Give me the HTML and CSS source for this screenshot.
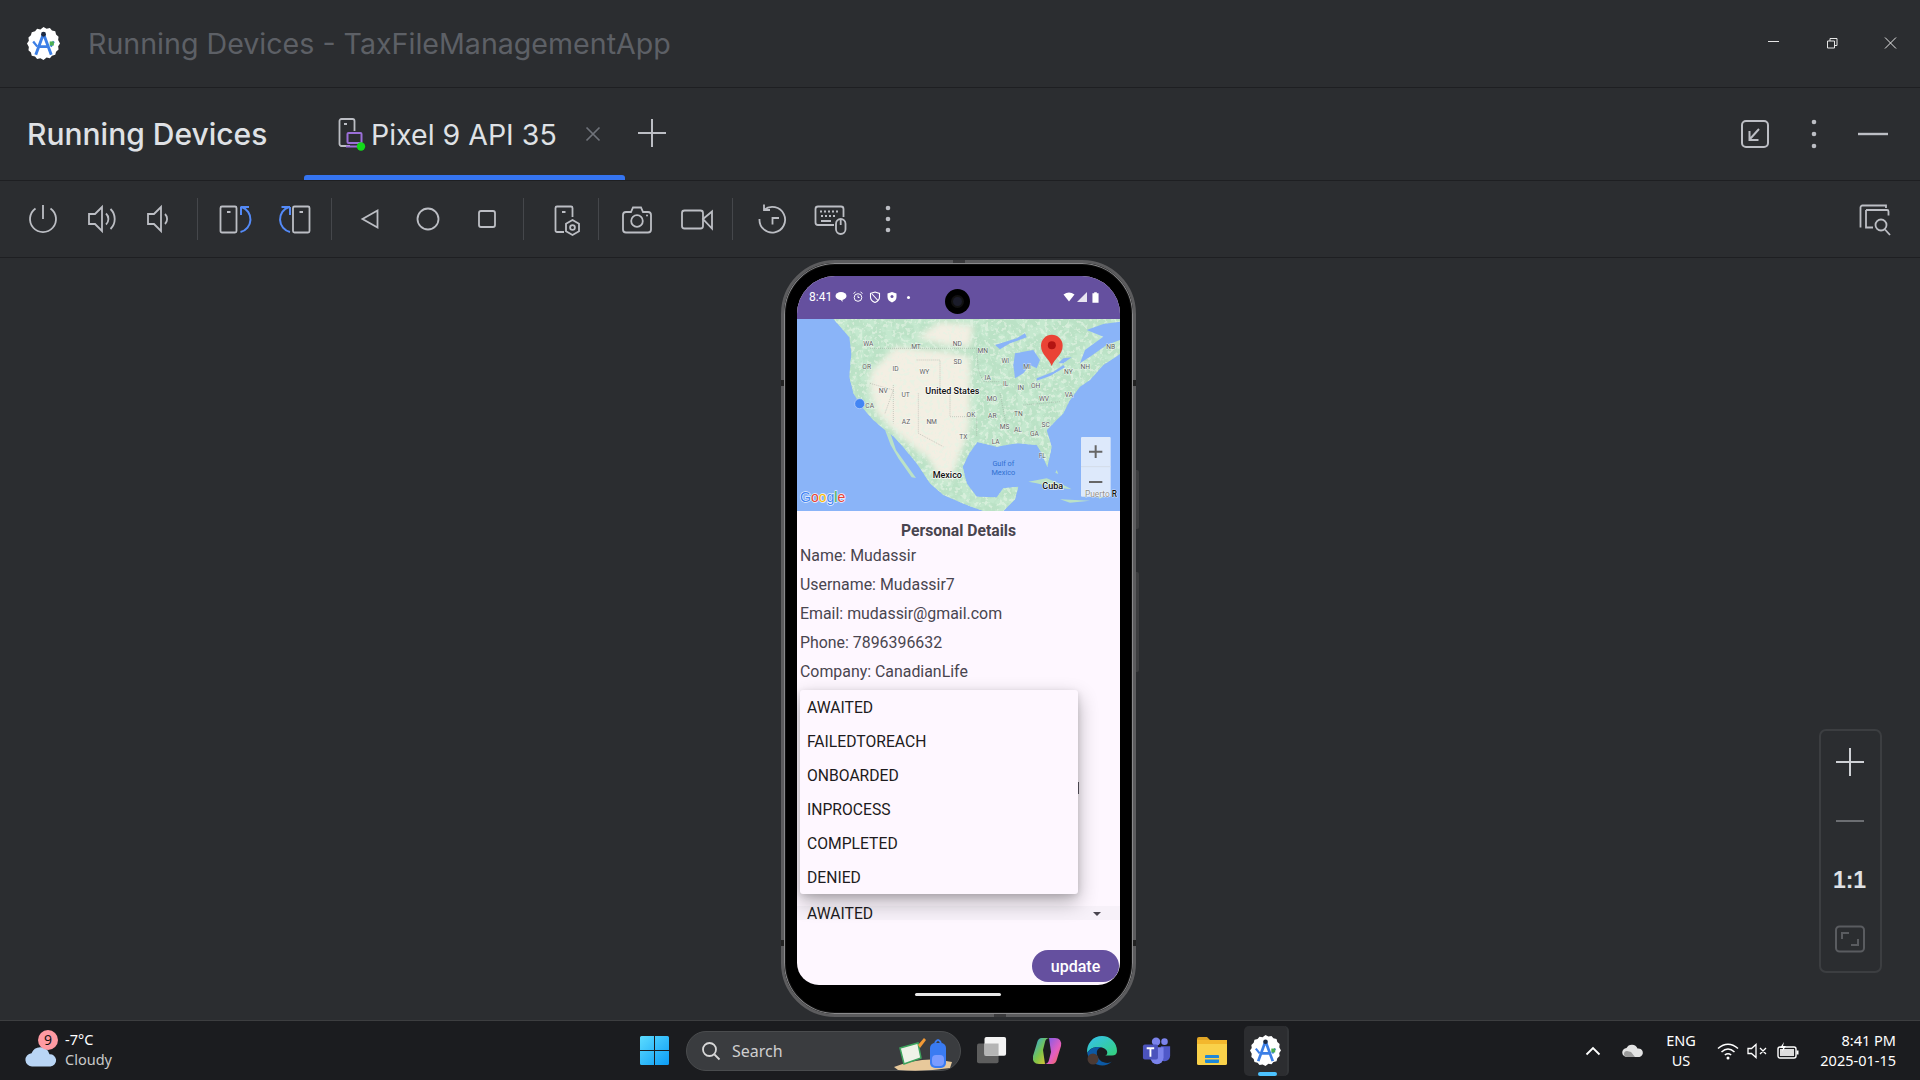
FILE: index.html
```html
<!DOCTYPE html>
<html lang="en">
<head>
<meta charset="utf-8">
<title>Running Devices - TaxFileManagementApp</title>
<link rel="stylesheet" href="styles.css">
</head>
<body>
<svg class="defs" width="0" height="0" aria-hidden="true">
  <symbol id="as-logo" viewBox="0 0 32 32">
    <path d="M16 0l3 1.600 3.200-.6 2 2.400 3.200.8.8 3 2.400 2.200-.4 3.200L32 16l-1.800 2.600.4 3.200-2.400 2.200-.8 3-3.200.8-2 2.400-3.200-.6L16 32l-3-1.600-3.200.6-2-2.400-3.200-.8-.8-3-2.400-2.200.4-3.200L0 16l1.800-2.600-.4-3.200 2.400-2.200.8-3 3.200-.8 2-2.400 3.200.6z" fill="#fff"/>
    <path d="M16 6.500L8.500 27M16 6.500L23.500 27M10.500 19h11" fill="none" stroke="#3c7fe6" stroke-width="2.800"/>
    <path d="M6 14l4 5M26 14l-3 5" stroke="#3c7fe6" stroke-width="2.200"/>
    <circle cx="16" cy="7" r="2.400" fill="#1c2b44"/>
    <rect x="22" y="14" width="4" height="4" fill="#4caf50"/>
  </symbol>
</svg>

<header class="titlebar">
  <svg class="as-logo"><use href="#as-logo"/></svg>
  <span class="title">Running Devices - TaxFileManagementApp</span>
  <div class="winctl">
    <svg class="ctl" viewBox="0 0 16 16"><path d="M2 6.500h11" stroke="#e6e6e6" fill="none"/></svg>
    <svg class="ctl" viewBox="0 0 16 16"><path d="M3.500 6h7v7h-7zM6 6V3.500h7v7h-2.500" stroke="#e6e6e6" fill="none"/></svg>
    <svg class="ctl" viewBox="0 0 16 16"><path d="M3 2.500l11 11M14 2.500l-11 11" stroke="#e6e6e6" fill="none"/></svg>
  </div>
</header>

<nav class="tabbar">
  <span class="tool-title">Running Devices</span>
  <div class="tab">
    <svg class="tab-icon" viewBox="0 0 30 34">
      <path d="M13 29H4.500a2 2 0 0 1-2-2V4a2 2 0 0 1 2-2h11a2 2 0 0 1 2 2v10M7 7h3" fill="none" stroke="#bcbec4" stroke-width="1.800"/>
      <rect x="10.500" y="16" width="14" height="10" rx="1" fill="none" stroke="#9b6fd8" stroke-width="2"/>
      <path d="M9 29.500h17" stroke="#9b6fd8" stroke-width="2"/>
      <circle cx="24" cy="29.500" r="4.200" fill="#12d81a"/>
    </svg>
    <span class="tab-label">Pixel 9 API 35</span>
    <svg class="tab-close" viewBox="0 0 16 16"><path d="M1.500 1.500l13 13M14.500 1.500l-13 13" stroke="#6f737a" stroke-width="1.700"/></svg>
  </div>
  <svg class="tab-add" viewBox="0 0 30 30"><path d="M15 1v28M1 15h28" stroke="#bcbec4" stroke-width="2"/></svg>
  <div class="tab-actions">
    <svg class="ic" viewBox="0 0 36 36"><rect x="5" y="5" width="26" height="26" rx="4" fill="none" stroke="#bcbec4" stroke-width="2"/><path d="M22 13l-9 10M12.500 15v9h9" fill="none" stroke="#bcbec4" stroke-width="2"/></svg>
    <svg class="ic" viewBox="0 0 36 36"><circle cx="18" cy="6" r="2.300" fill="#bcbec4"/><circle cx="18" cy="18" r="2.300" fill="#bcbec4"/><circle cx="18" cy="30" r="2.300" fill="#bcbec4"/></svg>
    <svg class="ic" viewBox="0 0 36 36"><path d="M3 18h30" stroke="#bcbec4" stroke-width="2.400"/></svg>
  </div>
</nav>

<div class="toolbar">
  <svg class="ic" viewBox="0 0 36 36"><path d="M10.500 7.500a13 13 0 1 0 15 0M18 4v14" class="st"/></svg>
  <svg class="ic" viewBox="0 0 36 36"><path d="M4 13h6l7-7v24l-7-7H4zM21 12.500a7.500 7.500 0 0 1 0 11M25.500 8a14 14 0 0 1 0 20" class="st"/></svg>
  <svg class="ic" viewBox="0 0 36 36"><path d="M7 13h6l7-7v24l-7-7H7zM24 13a7 7 0 0 1 0 10" class="st"/></svg>
  <i class="sep"></i>
  <svg class="ic" viewBox="0 0 36 36"><path d="M4 5.500h13a1.500 1.500 0 0 1 1.500 1.500v23a1.500 1.500 0 0 1-1.500 1.500H4A1.500 1.500 0 0 1 2.500 30V7A1.500 1.500 0 0 1 4 5.500zM9 11h3.500" class="st"/><path d="M22.500 31a13 13 0 0 0 1-25M22.500 6h8.500M23 6v8" fill="none" stroke="#548af7" stroke-width="2"/></svg>
  <svg class="ic" viewBox="0 0 36 36"><path d="M18.500 5.500h13.500a1.500 1.500 0 0 1 1.500 1.500v23a1.500 1.500 0 0 1-1.500 1.500H18.500a1.500 1.500 0 0 1-1.500-1.500V7a1.500 1.500 0 0 1 1.500-1.500zM23.500 11h3.500" class="st"/><path d="M14 31a13 13 0 0 1-1-25M14 6H5.500M14 6v8" fill="none" stroke="#548af7" stroke-width="2"/></svg>
  <i class="sep"></i>
  <svg class="ic" viewBox="0 0 36 36"><path d="M25.500 9.500v17L10.500 18z" class="st"/></svg>
  <svg class="ic" viewBox="0 0 36 36"><circle cx="18" cy="18" r="10.500" class="st"/></svg>
  <svg class="ic" viewBox="0 0 36 36"><rect x="10" y="10" width="16" height="16" rx="2" class="st"/></svg>
  <i class="sep"></i>
  <svg class="ic" viewBox="0 0 36 36"><path d="M14 31H7a1.500 1.500 0 0 1-1.500-1.500V7A1.500 1.500 0 0 1 7 5.500h14A1.500 1.500 0 0 1 22.500 7v9M12 11h3.500" class="st"/><path d="M22.500 19l6.500 3.800v7.400l-6.500 3.800-6.500-3.800v-7.400z" class="st"/><circle cx="22.500" cy="26.500" r="2.400" class="st"/></svg>
  <i class="sep"></i>
  <svg class="ic" viewBox="0 0 36 36"><path d="M7 11h5l2-4.500h8l2 4.500h5a3 3 0 0 1 3 3v14.500a3 3 0 0 1-3 3H7a3 3 0 0 1-3-3V14a3 3 0 0 1 3-3z" class="st"/><circle cx="18" cy="20" r="5.800" class="st"/><circle cx="28" cy="14.500" r="1" fill="#bcbec4"/></svg>
  <svg class="ic" viewBox="0 0 36 36"><rect x="3" y="9.500" width="21" height="18" rx="2.500" class="st"/><path d="M24 18l9-7.500v17z" class="st"/></svg>
  <i class="sep"></i>
  <svg class="ic" viewBox="0 0 36 36"><path d="M10 9a12.800 12.800 0 1 1-4.500 9M10 3.500V9h6M25 17h-6.500v6.500" class="st"/></svg>
  <svg class="ic" viewBox="0 0 36 36"><path d="M22 24H6a2.500 2.500 0 0 1-2.500-2.500V8A2.500 2.500 0 0 1 6 5.500h23A2.500 2.500 0 0 1 31.500 8v8M9 20h10" class="st"/><path d="M8 10.500h2M12 10.500h2M16 10.500h2M20 10.500h2M24 10.500h2M9 15h2M13 15h2M17 15h2M21 15h2" stroke="#bcbec4" stroke-width="1.800"/><rect x="24" y="18" width="9.500" height="15" rx="4.700" class="st"/><path d="M28.700 19v5" class="st"/></svg>
  <svg class="ic" viewBox="0 0 36 36"><circle cx="18" cy="7" r="2.300" fill="#bcbec4"/><circle cx="18" cy="18" r="2.300" fill="#bcbec4"/><circle cx="18" cy="29" r="2.300" fill="#bcbec4"/></svg>
  <svg class="ic find" viewBox="0 0 36 36"><path d="M29 7V4.500H5.500a2 2 0 0 0-2 2v20" class="st"/><path d="M9 9h21a1.500 1.500 0 0 1 1.500 1.500v4M9 9v17.500h7" class="st"/><circle cx="24" cy="24" r="5.500" class="st"/><path d="M28 28.500l5 5.500" class="st"/></svg>
</div>

<main class="canvas">
  <div class="phone">
    <i class="frame-mark mark-top"></i>
    <i class="band band-l1"></i><i class="band band-r1"></i><i class="band band-l2"></i><i class="band band-r2"></i>
    <i class="side-btn side-a"></i>
    <i class="side-btn side-b"></i>
    <div class="camera"><i></i></div>
    <div class="screen">
      <div class="statusbar">
        <span class="clock">8:41</span>
        <svg class="st-ic si-1" viewBox="0 0 12 12"><ellipse cx="6" cy="5" rx="5.500" ry="4" fill="#fff"/><path d="M5 8l2.500 3V8z" fill="#fff"/></svg>
        <svg class="st-ic si-2" viewBox="0 0 12 12"><circle cx="6" cy="6.500" r="3.800" fill="none" stroke="#fff"/><path d="M6 4.500v2h1.500M1.500 2.500l2-1.500M10.500 2.500l-2-1.500" stroke="#fff" fill="none"/></svg>
        <svg class="st-ic si-3" viewBox="0 0 12 12"><path d="M6 1l4.500 1.500v3.500c0 2.800-2 4.500-4.500 5.500C3.500 10.500 1.500 8.800 1.500 6V2.500zM3 3l6 6.500" fill="none" stroke="#fff" stroke-width="1.100"/></svg>
        <svg class="st-ic si-4" viewBox="0 0 12 12"><path d="M6 1l4.500 1.500v3.500c0 2.800-2 4.500-4.500 5.500C3.500 10.500 1.500 8.800 1.500 6V2.500z" fill="#fff"/><circle cx="6" cy="5.500" r="1.500" fill="#65509f"/></svg>
        <i class="st-dot"></i>
        <div class="st-right">
          <svg class="st-ic" viewBox="0 0 12 12"><path d="M0.500 3.500Q6 -0.500 11.500 3.500L6 10.500z" fill="#fff"/></svg>
          <svg class="st-ic" viewBox="0 0 12 12"><path d="M11 1v10H1z" fill="#fff" fill-opacity=".85"/></svg>
          <svg class="st-bat" viewBox="0 0 8 12"><path d="M2.500 0h3v1H7.500v11H.500V1h2z" fill="#fff"/></svg>
        </div>
      </div>

      <svg class="map" viewBox="81 207 969 576" role="img" aria-label="Map of North America">
        <defs>
          <clipPath id="land-clip"><path d="M190 207L215 235L238 262L244 310L238 380L250 430L275 470L310 510L345 540L372 560L400 592L440 640L480 700L520 735L590 765L640 783L700 783L735 748L745 710L700 715L680 742L620 740L590 700L578 650L598 610L622 576L680 590L740 580L800 585L815 610L832 652L845 590L830 540L880 490L900 450L930 410L960 390L1000 345L1050 312L1050 207z"/></clipPath>
          <filter id="soft" x="-10%" y="-10%" width="120%" height="120%"><feGaussianBlur stdDeviation="9"/></filter>
          <filter id="mottle" x="0" y="0" width="100%" height="100%">
            <feTurbulence type="fractalNoise" baseFrequency=".035" numOctaves="3" seed="4"/>
            <feColorMatrix type="matrix" values="0 0 0 0 .55  0 0 0 0 .81  0 0 0 0 .62  0 0 0 7 -3.300"/>
          </filter>
          <filter id="speck" x="0" y="0" width="100%" height="100%">
            <feTurbulence type="fractalNoise" baseFrequency=".09" numOctaves="2" seed="9"/>
            <feColorMatrix type="matrix" values="0 0 0 0 .78  0 0 0 0 .9  0 0 0 0 .78  0 0 0 9 -4.800"/>
          </filter>
        </defs>
        <rect x="81" y="207" width="969" height="576" fill="#8ab4f8"/>
        <path class="land" d="M345 540L362 552L378 600L438 684L425 682L385 625L362 585z"/>
        <g clip-path="url(#land-clip)">
          <rect x="81" y="207" width="969" height="576" class="land"/>
          <rect x="81" y="207" width="969" height="576" filter="url(#mottle)"/>
          <path class="desert" filter="url(#soft)" d="M375 290L530 305L600 320L600 500L590 560L560 640L545 690L500 670L470 620L440 600L380 550L320 490L300 420L300 370zM510 215L610 225L600 290L520 285L440 262z"/>
          <rect x="81" y="207" width="969" height="576" filter="url(#speck)" opacity=".6"/>
        </g>
        <path class="water" d="M735 310L760 305L790 300L810 330L800 355L780 345L760 370L735 385L730 345zM675 285L740 265L765 250L770 262L720 280L690 298zM800 385L850 365L880 345L885 352L840 378L800 392zM865 340L880 325L905 322L880 340z"/>
        <path class="water" d="M950 240L1000 222L1050 215L1050 270L1010 285L960 320L930 340L945 300L1000 260z"/>
        <path class="land" d="M775 695L830 685L880 705L905 718L850 712L800 700zM860 660L865 672L856 668zM870 748L960 752L900 758z"/>
        <path class="land" d="M985 740L1000 742L988 746z"/>
        <path class="border" d="M300 295L620 295L625 360L640 395L690 395M440 330L510 330L510 430L540 430L540 500L600 500M370 405L370 520M445 430L445 550L520 590M620 500L620 560M690 430L710 530M760 465L870 455M300 400L370 420L345 490"/>
        <g class="states">
          <text x="295" y="288">WA</text><text x="438" y="296">MT</text><text x="562" y="287">ND</text><text x="638" y="310">MN</text><text x="290" y="357">OR</text><text x="377" y="363">ID</text><text x="563" y="342">SD</text><text x="463" y="371">WY</text><text x="706" y="338">WI</text><text x="771" y="356">MI</text><text x="653" y="389">IA</text><text x="340" y="429">NV</text><text x="407" y="440">UT</text><text x="707" y="407">IL</text><text x="752" y="420">IN</text><text x="797" y="413">OH</text><text x="895" y="372">NY</text><text x="946" y="356">NH</text><text x="1022" y="296">NB</text><text x="299" y="474">CA</text><text x="408" y="521">AZ</text><text x="485" y="521">NM</text><text x="603" y="500">OK</text><text x="667" y="504">AR</text><text x="745" y="498">TN</text><text x="666" y="454">MO</text><text x="822" y="452">WV</text><text x="897" y="442">VA</text><text x="704" y="536">MS</text><text x="744" y="546">AL</text><text x="793" y="557">GA</text><text x="827" y="532">SC</text><text x="677" y="582">LA</text><text x="580" y="566">TX</text><text x="817" y="624">FL</text>
        </g>
        <g class="places">
          <text x="547" y="431">United States</text><text x="532" y="684">Mexico</text><text x="848" y="717">Cuba</text>
        </g>
        <g class="sea"><text x="700" y="647">Gulf of</text><text x="700" y="674">Mexico</text></g>
        <circle cx="269" cy="461" r="15" fill="#4285f4" stroke="#c9dafc" stroke-width="2"/>
        <path d="M845 348C838 325 813 315 813 287a32.500 32.500 0 0 1 65 0C878 315 853 325 845 348z" fill="#ea4335"/>
        <circle cx="845.500" cy="286" r="12" fill="#b31412"/>
        <rect x="933" y="561" width="89" height="179" rx="3" fill="#e6eefb" fill-opacity=".9"/>
        <path d="M933 650h89" stroke="#d4dce8" stroke-width="3"/>
        <path d="M957 605h40M977 586v38M957 696h40" stroke="#666" stroke-width="6"/>
        <text class="puerto" x="945" y="740">Puerto <tspan class="puerto-r">R</tspan></text>
        <text class="google" x="90" y="757"><tspan fill="#4285f4">G</tspan><tspan fill="#ea4335">o</tspan><tspan fill="#fbbc05">o</tspan><tspan fill="#4285f4">g</tspan><tspan fill="#34a853">l</tspan><tspan fill="#ea4335">e</tspan></text>
      </svg>

      <section class="details">
        <h2 class="details-title">Personal Details</h2>
        <p class="row">Name: Mudassir</p>
        <p class="row">Username: Mudassir7</p>
        <p class="row">Email: mudassir@gmail.com</p>
        <p class="row">Phone: 7896396632</p>
        <p class="row">Company: CanadianLife</p>
      </section>

      <div class="field"><span>AWAITED</span><i class="caret"></i></div>
      <div class="actions"><button class="update" type="button">update</button></div>

      <ul class="menu">
        <li>AWAITED</li><li>FAILEDTOREACH</li><li>ONBOARDED</li><li>INPROCESS</li><li>COMPLETED</li><li>DENIED</li>
      </ul>
      <i class="menu-tick"></i>
    </div>
    <div class="homebar"></div>
    <i class="frame-mark mark-bottom"></i>
  </div>

  <aside class="zoombox">
    <svg class="zb" viewBox="0 0 30 30"><path d="M15 1v28M1 15h28" stroke="#cfd1d5" stroke-width="2"/></svg>
    <svg class="zb" viewBox="0 0 30 30"><path d="M1 15h28" stroke="#6c6e72" stroke-width="2"/></svg>
    <span class="zb-one">1:1</span>
    <svg class="zb" viewBox="0 0 30 30"><rect x="1" y="2.500" width="28" height="25" rx="3.500" fill="none" stroke="#5a5c60" stroke-width="2"/><path d="M7 15V9h7M23 15v6h-7" fill="none" stroke="#5a5c60" stroke-width="2"/></svg>
  </aside>
</main>

<footer class="taskbar">
  <div class="tb-left">
    <div class="weather-ic">
      <svg viewBox="0 0 36 24"><path d="M9 22a7 7 0 0 1-1-14 10 10 0 0 1 19 1 6.500 6.500 0 0 1 1 13z" fill="#b9d5f5"/></svg>
      <span class="badge">9</span>
    </div>
    <div class="weather-text"><span class="w-temp">-7°C</span><span class="w-desc">Cloudy</span></div>
  </div>
  <div class="tb-center">
    <svg class="winlogo" viewBox="0 0 29 29"><defs><linearGradient id="wg" x1="0" y1="0" x2="1" y2="1"><stop offset="0" stop-color="#5cdcff"/><stop offset="1" stop-color="#0c9cf5"/></linearGradient></defs><path d="M0 1.500Q0 0 1.500 0H14V14H0zM15 0h12.500Q29 0 29 1.500V14H15zM0 15H14V29H1.500Q0 29 0 27.500zM15 15H29V27.500Q29 29 27.500 29H15z" fill="url(#wg)"/></svg>
    <div class="search">
      <svg class="search-ic" viewBox="0 0 20 20"><circle cx="8.500" cy="8.500" r="6.500" fill="none" stroke="#d8d8d8" stroke-width="1.800"/><path d="M13.500 13.500l5 5" stroke="#d8d8d8" stroke-width="1.800"/></svg>
      <span class="search-text">Search</span>
      <svg class="search-art" viewBox="0 0 60 34"><path d="M0 30Q30 18 58 25L56 31Q30 35 4 33z" fill="#e8c99b"/><path d="M6 11l18-5 3 15-17 6z" fill="#eef2e8" stroke="#3da35d" stroke-width="1.500"/><path d="M24 8l6-7 2 2-6 8z" fill="#f39a35"/><rect x="36" y="6" width="16" height="25" rx="5" fill="#3a7bf2"/><path d="M41 6q3-6 6 0" fill="none" stroke="#3a7bf2" stroke-width="2"/><rect x="38" y="18" width="12" height="11" rx="4" fill="#7b9cff"/></svg>
    </div>
    <div class="tb-app">
      <svg viewBox="0 0 32 30"><rect x="0" y="7" width="23" height="21" rx="2" fill="#5d5d5d"/><rect x="8" y="0" width="23" height="20" rx="2" fill="#f4f4f4"/><rect x="8" y="7" width="15" height="13" fill="#b5b5b5"/></svg>
    </div>
    <div class="tb-app">
      <svg viewBox="0 0 30 28"><defs><linearGradient id="cg" x1="0" y1="0" x2="1" y2="1"><stop offset="0" stop-color="#2aa8e8"/><stop offset=".5" stop-color="#7cc44a"/><stop offset="1" stop-color="#f6c22d"/></linearGradient><linearGradient id="cg2" x1="0" y1="0" x2="1" y2="1"><stop offset="0" stop-color="#6a5bf0"/><stop offset=".6" stop-color="#e45ec0"/><stop offset="1" stop-color="#f36b3d"/></linearGradient></defs><path d="M10 1h8a5 5 0 0 0-5 4l-2 8 2 14H7Q0 27 1 19L5 6Q6 1 10 1z" fill="url(#cg)"/><path d="M20 27h-8a5 5 0 0 0 5-4l2-8-2-14h6q7 0 6 8l-4 13q-1 5-5 5z" fill="url(#cg2)"/></svg>
    </div>
    <div class="tb-app">
      <svg viewBox="0 0 30 30"><defs><linearGradient id="eg" x1="0" y1="0" x2="1" y2="1"><stop offset="0" stop-color="#35c1f1"/><stop offset="1" stop-color="#34d17a"/></linearGradient></defs><path d="M15 0a15 15 0 0 1 15 15c0 3-2 4.500-5 4.500h-7c3 0 4-6-3-8C9 10 3 12 .2 17A15 15 0 0 1 15 0z" fill="url(#eg)"/><path d="M.2 17C3 12 9 10 15 11.500 7 12 9 23 16 26c4 1.500 7 1 9-.5A15 15 0 0 1 .2 17z" fill="#0c59a4"/><circle cx="6" cy="23" r="5.500" fill="#4b3a34"/></svg>
    </div>
    <div class="tb-app">
      <svg viewBox="0 0 32 30"><circle cx="24" cy="5" r="3.500" fill="#7b83eb"/><circle cx="15" cy="5" r="4.500" fill="#7b83eb"/><path d="M20 10h10v10a6 6 0 0 1-9 5z" fill="#5059c9"/><path d="M9 11h14v11a7 7 0 0 1-14 0z" fill="#7b83eb"/><rect x="1" y="8" width="16" height="16" rx="2" fill="#4b53bc"/><path d="M5 12h8M9 12v9" stroke="#fff" stroke-width="2"/></svg>
    </div>
    <div class="tb-app">
      <svg viewBox="0 0 30 30"><path d="M0 3a2 2 0 0 1 2-2h8l3 3h-13z" fill="#e0a526"/><rect x="0" y="4" width="30" height="25" rx="1.500" fill="#f9d14a"/><rect x="0" y="4" width="30" height="4" fill="#f3b72d"/><rect x="8" y="19" width="14" height="8" rx="1" fill="#1e88d8"/><rect x="8" y="22" width="14" height="1.500" fill="#f9d14a"/></svg>
    </div>
    <div class="tb-active">
      <svg class="as-task"><use href="#as-logo"/></svg>
      <i class="active-pill"></i>
    </div>
  </div>
  <div class="tb-right">
    <svg class="tray-chev" viewBox="0 0 16 10"><path d="M1.500 8.500L8 2l6.500 6.500" fill="none" stroke="#fff" stroke-width="1.800"/></svg>
    <svg class="tray-cloud" viewBox="0 0 22 14"><path d="M5 13a4.500 4.500 0 0 1-.5-9 6 6 0 0 1 11 .5 4.300 4.300 0 0 1 2 8.500z" fill="#e3e3e3"/><path d="M5 13a3 3 0 0 1 0-6l4 1 4 5z" fill="#9a9a9a"/></svg>
    <div class="lang"><span>ENG</span><span>US</span></div>
    <svg class="tray-ic wifi" viewBox="0 0 22 18"><path d="M1 6.500Q11-2 21 6.500M4.500 10Q11 4 17.500 10M7.800 13Q11 10.500 14.200 13" fill="none" stroke="#fff" stroke-width="1.500"/><circle cx="11" cy="16" r="1.500" fill="#fff"/></svg>
    <svg class="tray-ic sound" viewBox="0 0 20 16"><path d="M1 5.500h3.500L9 1.500v13l-4.500-4H1zM13 5l6 6M19 5l-6 6" fill="none" stroke="#fff" stroke-width="1.300"/></svg>
    <svg class="tray-ic batt" viewBox="0 0 22 18"><rect x="1" y="5" width="18" height="11" rx="2" fill="none" stroke="#fff" stroke-width="1.400"/><rect x="3" y="7" width="14" height="7" fill="#fff" opacity=".85"/><rect x="19.500" y="8.500" width="2" height="4" fill="#fff"/><path d="M7 0L3 6h3l-1 4 4-6H6z" fill="#fff"/></svg>
    <div class="clockbox"><span>8:41 PM</span><span>2025-01-15</span></div>
  </div>
</footer>
</body>
</html>
```

FILE: styles.css
```css
* { box-sizing: border-box; }
html, body { margin: 0; padding: 0; }
body {
  width: 1920px; height: 1080px; overflow: hidden;
  background: #2b2d30; color: #dfe1e5;
  font-family: Inter, "Noto Sans", sans-serif;
  display: flex; flex-direction: column;
}
.defs { position: absolute; }
i { display: block; }

/* title bar */
.titlebar {
  height: 88px; flex: none; display: flex; align-items: center;
  padding-left: 27px; border-bottom: 1px solid #1e1f22;
}
.as-logo { width: 33px; height: 33px; flex: none; }
.title { margin-left: 28px; font-size: 28.600px; color: #5d6066; white-space: nowrap; }
.winctl { margin-left: auto; display: flex; gap: 42px; padding-right: 22px; margin-top: -2px; }
.ctl { width: 16px; height: 16px; }

/* tab bar */
.tabbar {
  height: 93px; flex: none; display: flex; align-items: center;
  padding-left: 27px; border-bottom: 1px solid #1e1f22;
}
.tool-title { font-size: 30px; font-weight: 500; width: 277px; white-space: nowrap; }
.tab {
  width: 321px; height: 100%; display: flex; align-items: center;
  padding-left: 33px; position: relative;
}
.tab::after {
  content: ""; position: absolute; left: 0; right: 0; bottom: 0; height: 5px;
  background: #3574f0; border-radius: 3px 3px 0 0;
}
.tab-icon { width: 30px; height: 34px; flex: none; }
.tab-label { margin-left: 4px; font-size: 28.500px; white-space: nowrap; }
.tab-close { width: 16px; height: 16px; margin-left: 28px; flex: none; }
.tab-add { width: 30px; height: 30px; margin-left: 12px; margin-top: -2px; flex: none; }
.tab-actions { margin-left: auto; display: flex; gap: 23px; padding-right: 29px; }

/* toolbar */
.ic { width: 36px; height: 36px; display: block; flex: none; }
.st { fill: none; stroke: #bcbec4; stroke-width: 1.800; }
.toolbar {
  height: 77px; flex: none; border-bottom: 1px solid #1e1f22;
  display: flex; align-items: center; padding-left: 25px;
}
.toolbar > :nth-child(2)  { margin-left: 24px; }
.toolbar > :nth-child(3)  { margin-left: 20px; }
.toolbar > :nth-child(4)  { margin-left: 20px; }
.toolbar > :nth-child(5)  { margin-left: 20px; }
.toolbar > :nth-child(6)  { margin-left: 22px; }
.toolbar > :nth-child(7)  { margin-left: 19px; }
.toolbar > :nth-child(8)  { margin-left: 20px; }
.toolbar > :nth-child(9)  { margin-left: 22px; }
.toolbar > :nth-child(10) { margin-left: 23px; }
.toolbar > :nth-child(11) { margin-left: 18px; }
.toolbar > :nth-child(12) { margin-left: 26px; }
.toolbar > :nth-child(13) { margin-left: 12px; }
.toolbar > :nth-child(14) { margin-left: 20px; }
.toolbar > :nth-child(15) { margin-left: 24px; }
.toolbar > :nth-child(16) { margin-left: 17px; }
.toolbar > :nth-child(17) { margin-left: 21px; }
.toolbar > :nth-child(18) { margin-left: 22px; }
.toolbar > :nth-child(19) { margin-left: 22px; }
.toolbar > .find { margin-left: auto; margin-right: 27px; }
.sep { width: 1px; height: 42px; background: #45474b; flex: none; }

/* canvas */
.canvas {
  flex: 1; min-height: 0; position: relative; display: flex;
  justify-content: center; align-items: flex-start; padding: 2px 3px 0 0;
}
.phone {
  width: 355px; height: 757px; flex: none; position: relative; background: #000;
  border: 3px solid #5c5c5e; border-radius: 54px;
  padding: 13px 11px 0 13px; box-shadow: inset 0 0 0 1px #8a8a8c, inset 0 0 0 2px #111;
}
.frame-mark { position: absolute; background: #3a3a3c; width: 12px; height: 3px; left: 50%; margin-left: -6px; }
.mark-top { top: -3px; }
.mark-bottom { bottom: -3px; margin-left: 35px; }
.band { position: absolute; width: 3px; height: 6px; background: #222; }
.band-l1, .band-l2 { left: -3px; }
.band-r1, .band-r2 { right: -3px; }
.band-l1, .band-r1 { top: 117px; }
.band-l2, .band-r2 { top: 677px; }
.side-btn { position: absolute; right: -6px; width: 3px; background: #3d3e40; border-radius: 0 2px 2px 0; }
.side-a { top: 207px; height: 59px; }
.side-b { top: 309px; height: 100px; }
.camera {
  position: absolute; z-index: 3; left: 161px; top: 26px; width: 25px; height: 25px;
  border-radius: 50%; background: #000; display: flex; align-items: center; justify-content: center;
}
.camera i { width: 9px; height: 9px; border-radius: 50%; background: #1b1c2a; box-shadow: 0 0 0 2px #111; }
.screen {
  width: 323px; height: 709px; position: relative; overflow: hidden;
  border-radius: 38px 38px 22px 22px; background: #fef7ff;
  font-family: Roboto, sans-serif;
}
.statusbar { height: 43px; background: #65509f; position: relative; display: flex; align-items: center; padding: 0 8px 0 12px; color: #fff; }
.clock { font-size: 12px; width: 26px; margin-top: -2px; }
.st-ic { width: 12px; height: 12px; flex: none; margin-top: -1px; }
.si-2 { margin-left: 5px; } .si-3 { margin-left: 5px; } .si-4 { margin-left: 5px; }
.st-dot { width: 3px; height: 3px; border-radius: 50%; background: #fff; margin-left: 9px; }
.st-right { margin-left: auto; display: flex; align-items: center; gap: 1px; padding-right: 13px; }
.st-bat { width: 7px; height: 11px; margin-left: 3px; margin-top: -1px; }

/* map */
.map { display: block; width: 323px; height: 192px; }
.land { fill: #bbe2c6; }
.desert { fill: #f3efe3; }
.water { fill: #8ab4f8; }
.border { fill: none; stroke: #8d8f8b; stroke-width: 1.200; stroke-dasharray: 3 3; }
.states text { font: 20px Roboto, sans-serif; fill: #5d5d5d; text-anchor: middle; paint-order: stroke; stroke: #fff; stroke-width: 3px; stroke-opacity: .7; }
.places text { font: 500 27px Roboto, sans-serif; fill: #111; text-anchor: middle; paint-order: stroke; stroke: #fff; stroke-width: 4px; stroke-opacity: .8; }
.sea text { font: 22px Roboto, sans-serif; fill: #2f6fd0; text-anchor: middle; }
.puerto { font: 25px Roboto, sans-serif; fill: #8d8d8d; paint-order: stroke; stroke: #fff; stroke-width: 2px; }
.puerto-r { fill: #111; font-weight: 500; }
.google { font: 500 42px "Liberation Sans", sans-serif; paint-order: stroke; stroke: #fff; stroke-width: 4px; stroke-opacity: .85; }

/* details */
.details { padding: 9px 3px 0; color: #49454f; }
.details-title { margin: 0; font-size: 15.700px; line-height: 21px; font-weight: 700; text-align: center; }
.row { margin: 0; font-size: 15.900px; line-height: 29.100px; white-space: nowrap; }
.field {
  margin-top: 219.500px; height: 14px; overflow: hidden; display: flex; justify-content: space-between;
  padding: 0 19px 0 10px; background: #f7f1f9; color: #1d1b20; font-size: 15.700px; line-height: 16px;
}
.caret { width: 0; height: 0; margin-top: 6px; border: 4px solid transparent; border-top: 4px solid #49454f; border-bottom: 0; }
.actions { display: flex; justify-content: flex-end; padding-right: 1px; margin-top: 30.500px; }
.update {
  width: 87px; height: 32px; border: 0; border-radius: 16px; background: #65509f; color: #fff;
  font: 500 16px Roboto, sans-serif; padding: 0;
}
.menu {
  position: absolute; left: 3px; top: 414px; width: 278px; height: 204px; margin: 0; padding: 1px 0 0; list-style: none;
  background: #fef7ff; border-radius: 3px; box-shadow: 0 8px 20px rgba(0,0,0,.3), 0 2px 6px rgba(0,0,0,.12);
  color: #1d1b20; font-size: 15.700px;
}
.menu li { height: 34px; line-height: 34px; padding-left: 7px; }
.menu-tick { position: absolute; left: 281px; top: 506px; width: 1px; height: 12px; background: #49454f; }
.homebar { width: 86px; height: 3px; border-radius: 2px; background: #e8e8e8; margin: 8px 0 0 118px; }

/* zoom box */
.zoombox {
  position: absolute; left: 1819px; top: 471px; width: 63px; height: 244px;
  border: 2px solid #3c3e41; border-radius: 7px; padding: 16px 2px 0 0;
  display: flex; flex-direction: column; align-items: center;
}
.zb { width: 30px; height: 30px; flex: none; }
.zb:nth-child(2) { margin-top: 29px; }
.zb-one { font: 700 23px/30px "Liberation Sans", sans-serif; color: #dfe1e5; margin-top: 29px; }
.zb:nth-child(4) { margin-top: 29px; }

/* taskbar */
.taskbar {
  height: 60px; flex: none; background: #1b1c1f; border-top: 1px solid #3d3e40;
  display: flex; align-items: center; font-family: "Noto Sans", sans-serif; color: #fff;
}
.tb-left { width: 640px; flex: none; display: flex; align-items: center; padding-left: 24px; }
.weather-ic { width: 41px; height: 36px; position: relative; flex: none; }
.weather-ic svg { position: absolute; left: 0; bottom: 0; width: 34px; height: 24px; }
.badge {
  position: absolute; left: 14px; top: -3px; width: 20px; height: 20px; border-radius: 50%;
  background: #ff9aa2; color: #111; font-size: 14px; line-height: 20px; text-align: center;
}
.weather-text { display: flex; flex-direction: column; font-size: 14.500px; line-height: 20px; margin-top: -3px; }
.w-desc { color: #c9c9c9; }
.tb-center { display: flex; align-items: center; }
.winlogo { width: 29px; height: 29px; flex: none; }
.search {
  width: 275px; height: 40px; margin-left: 17px; border-radius: 20px; background: #3a3c3f;
  border: 1px solid #4a4c4e; display: flex; align-items: center; padding-left: 14px; position: relative;
}
.search-ic { width: 20px; height: 20px; flex: none; }
.search-text { margin-left: 11px; font-size: 16px; color: #cfcfcf; }
.search-art { position: absolute; right: 6px; top: 5px; width: 60px; height: 34px; }
.tb-app { width: 55px; display: flex; justify-content: center; flex: none; }
.tb-app:nth-child(3) { margin-left: 3px; }
.tb-app svg { width: 30px; height: 30px; }
.tb-active {
  width: 45px; height: 50px; margin-left: 5px; flex: none; background: #2c2d30; border-radius: 5px;
  border-right: 2px solid #333538; display: flex; align-items: center; justify-content: center; position: relative;
}
.as-task { width: 31px; height: 31px; }
.active-pill { position: absolute; left: 14px; bottom: 0; width: 19px; height: 4px; border-radius: 2px; background: #4cc2ff; }
.tb-right { margin-left: auto; display: flex; align-items: center; padding-right: 24px; }
.tray-chev { width: 16px; height: 10px; }
.tray-cloud { width: 22px; height: 14px; margin-left: 21px; }
.lang { width: 50px; margin-left: 12px; display: flex; flex-direction: column; align-items: center; font-size: 14.500px; line-height: 20px; margin-top: -1px; }
.tray-ic { flex: none; }
.wifi { width: 22px; height: 18px; margin-left: 11px; }
.sound { width: 20px; height: 16px; margin-left: 8px; }
.batt { width: 22px; height: 18px; margin-left: 10px; }
.clockbox { width: 86px; margin-left: 11px; display: flex; flex-direction: column; align-items: flex-end; font-size: 14.500px; line-height: 20px; white-space: nowrap; margin-top: -1px; }
```
